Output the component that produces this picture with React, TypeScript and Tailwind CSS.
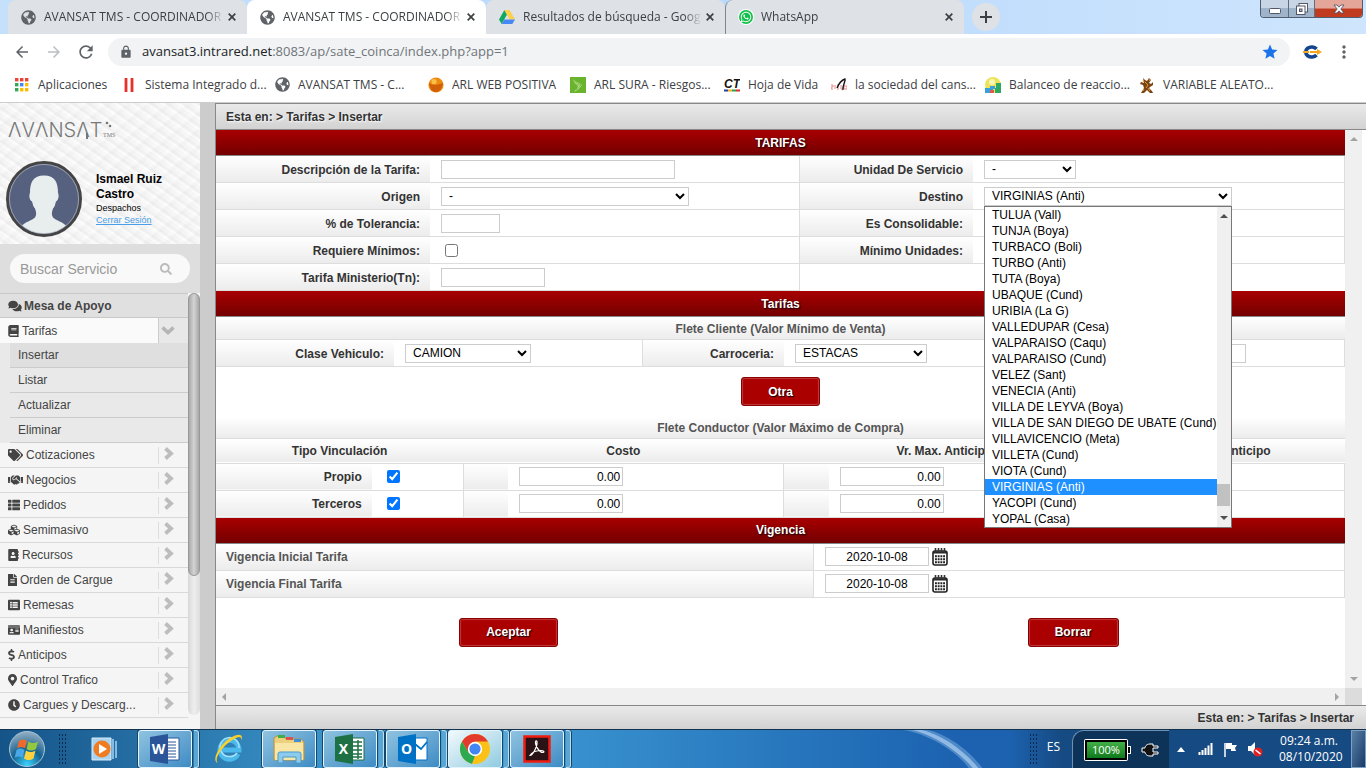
import { useState } from "react";
import type { ReactNode } from "react";
import {
  FaAddressBook,
  FaBook,
  FaClock,
  FaComments,
  FaCubes,
  FaDollarSign,
  FaFileAlt,
  FaGlobeAmericas,
  FaHandshake,
  FaIdCard,
  FaListAlt,
  FaMapMarkerAlt,
  FaSearch,
  FaTags,
  FaThList,
  FaWhatsapp,
} from "react-icons/fa";
import { MdArrowBack, MdArrowForward, MdLock, MdRefresh, MdStar, MdMoreVert } from "react-icons/md";

/* ---------- Browser ---------- */

function Globe() {
  return <FaGlobeAmericas className="size-[15px] shrink-0 text-[#5f6368]" />;
}

function DriveIcon() {
  return (
    <svg viewBox="0 0 16 14" className="h-[14px] w-4 shrink-0">
      <path d="M5.4 0 0 9.4 2.7 14 8 4.6z" fill="#11a861" />
      <path d="M5.4 0h5.2L16 9.4h-5.3z" fill="#ffcf48" />
      <path d="M5.3 9.4H16L13.3 14H2.7z" fill="#4688f4" />
    </svg>
  );
}

function WhatsAppIcon() {
  return (
    <span className="grid size-[14px] shrink-0 place-items-center rounded-full bg-[#12c04a] ring-1 ring-white">
      <FaWhatsapp className="size-3 text-white" />
    </span>
  );
}

function Cross() {
  return (
    <svg viewBox="0 0 8 8" className="size-2 shrink-0">
      <path d="M.7.7l6.6 6.6M7.3.7.7 7.3" stroke="#3c4043" strokeWidth="1.7" />
    </svg>
  );
}

const tabs = [
  { title: "AVANSAT TMS - COORDINADOR", icon: <Globe />, active: false },
  { title: "AVANSAT TMS - COORDINADOR", icon: <Globe />, active: true },
  { title: "Resultados de búsqueda - Google", icon: <DriveIcon />, active: false },
  { title: "WhatsApp", icon: <WhatsAppIcon />, active: false },
];

function TabStrip() {
  return (
    <div className="flex h-[34px] bg-linear-to-r from-[#c5e0fb] via-[#b8d9fc] to-[#cfe5fd] pl-2">
      {tabs.map((tab, i) => (
        <div
          key={i}
          className={
            "flex w-[239px] items-center rounded-t-lg pr-[11px] pl-[13px] " +
            (tab.active ? "bg-white" : "bg-[#dee1e6]") +
            (i === 3 ? " border-l border-[#80868b]" : "")
          }
        >
          {tab.icon}
          <span className="ml-2 flex-1 overflow-hidden text-xs whitespace-nowrap text-[#3c4043] [mask-image:linear-gradient(to_right,black_90%,transparent)]">
            {tab.title}
          </span>
          <button aria-label="Cerrar pestaña" className="ml-1">
            <Cross />
          </button>
        </div>
      ))}
      <button aria-label="Nueva pestaña" className="mt-[3px] ml-2 grid size-7 place-items-center rounded-full bg-[#dee1e6]">
        <svg viewBox="0 0 12 12" className="size-3">
          <path d="M6 0v12M0 6h12" stroke="#3c4043" strokeWidth="2" />
        </svg>
      </button>
      <div className="mr-[3px] ml-auto flex h-[18px] overflow-hidden rounded-b border border-t-0 border-[#4e5d70]">
        <button aria-label="Minimizar" className="grid w-7 place-items-center border-r border-[#5d6d80] bg-linear-to-b from-[#c8d5e4] from-50% to-[#9fb3ca] to-50%">
          <svg viewBox="0 0 12 6" className="mt-1 h-[6px] w-3">
            <rect x=".5" y=".5" width="11" height="5" rx="1" fill="#fff" stroke="#535666" />
          </svg>
        </button>
        <button aria-label="Restaurar" className="grid w-[26px] place-items-center border-r border-[#5d6d80] bg-linear-to-b from-[#c8d5e4] from-50% to-[#9fb3ca] to-50%">
          <svg viewBox="0 0 12 12" className="size-3">
            <rect x="3" y=".5" width="8.5" height="8.5" fill="#fff" stroke="#535666" />
            <rect x=".5" y="3" width="8.5" height="8.5" fill="#fff" stroke="#535666" />
            <rect x="3.5" y="6" width="2.5" height="2.5" fill="#9fb3ca" stroke="#535666" />
          </svg>
        </button>
        <button aria-label="Cerrar" className="grid w-[47px] place-items-center bg-linear-to-b from-[#e4a698] from-45% to-[#c03a20] to-55%">
          <svg viewBox="0 0 12 10" className="h-[10px] w-3">
            <path d="M1 1h3l2 2.2L8 1h3L7.8 5 11 9H8L6 6.8 4 9H1l3.2-4z" fill="#fff" stroke="#535666" strokeWidth=".9" />
          </svg>
        </button>
      </div>
    </div>
  );
}

function Toolbar() {
  return (
    <div className="flex h-9 items-center bg-white pr-3 pl-[13px]">
      <MdArrowBack className="size-[18px] text-[#5f6368]" />
      <MdArrowForward className="ml-[14px] size-[18px] text-[#bcbfc2]" />
      <MdRefresh className="ml-[13px] size-5 text-[#5f6368]" />
      <div className="ml-3 flex h-7 flex-1 items-center rounded-full bg-[#f1f3f4] px-[11px]">
        <MdLock className="size-[14px] text-[#5f6368]" />
        <div className="ml-[9px] flex-1 text-[13px] whitespace-nowrap text-[#70757a]">
          <span className="text-[#202124]">avansat3.intrared.net</span>:8083/ap/sate_coinca/index.php?app=1
        </div>
        <MdStar className="size-[18px] text-[#1a73e8]" />
      </div>
      <svg viewBox="0 0 20 14" className="ml-3 h-[14px] w-5">
        <path d="M14.5 4A6 5 0 1 0 14.5 10" fill="none" stroke="#12458c" strokeWidth="3.6" />
        <path d="M1 7h6M8 7h8" stroke="#f5a81c" strokeWidth="2" />
        <path d="M15 4l5 3-5 3z" fill="#f5a81c" />
      </svg>
      <MdMoreVert className="ml-3 size-5 text-[#5f6368]" />
    </div>
  );
}

const appDots = ["#ea4335", "#ea4335", "#ea4335", "#34a853", "#4285f4", "#fbbc04", "#34a853", "#fbbc04", "#fbbc04"];

const bookmarks: { label: string; width: string; icon: ReactNode }[] = [
  {
    label: "Aplicaciones",
    width: "w-[107px]",
    icon: appDots.map((c, i) => <rect key={i} x={1 + (i % 3) * 5} y={1 + Math.floor(i / 3) * 5} width="3.4" height="3.4" fill={c} />),
  },
  { label: "Sistema Integrado d...", width: "w-[154px]", icon: <path d="M5 1v14M11 1v14" stroke="#e8302a" strokeWidth="2.8" /> },
  { label: "AVANSAT TMS - C...", width: "w-[153px]", icon: null },
  {
    label: "ARL WEB POSITIVA",
    width: "w-[142px]",
    icon: (
      <>
        <circle cx="8" cy="8" r="7.6" fill="#ef8a10" />
        <path d="M1 6c4 3 9 2 14 0-1 6-4 9-7 9S2 13 1 6z" fill="#cf5f08" />
        <circle cx="6" cy="4.5" r="2.6" fill="#fbc04a" />
      </>
    ),
  },
  {
    label: "ARL SURA - Riesgos...",
    width: "w-[154px]",
    icon: (
      <>
        <path d="M0 0h16v16H0z" fill="#69b32d" />
        <path d="M3 2c2 3 6 3 9 6-2 3-4 5-8 7 2-3 4-4 4-6-2-1-4-3-5-7z" fill="#b9dd96" />
        <path d="M4 4c2 2 5 2 7 4M5 7c2 1 4 1 6 1M6 13c2-2 4-3 5-5" stroke="#69b32d" strokeWidth=".7" fill="none" />
      </>
    ),
  },
  {
    label: "Hoja de Vida",
    width: "w-[107px]",
    icon: (
      <>
        <text x="0" y="11" fontSize="12" fontWeight="900" fontStyle="italic" fontFamily="Liberation Sans, sans-serif" fill="#111">
          CT
        </text>
        <path d="M0 13.5h4" stroke="#21409a" strokeWidth="2" />
        <path d="M4 13.5h4" stroke="#f2b31b" strokeWidth="2" />
        <path d="M8 13.5h4" stroke="#2c9d51" strokeWidth="2" />
        <path d="M12 13.5h4" stroke="#d92b2b" strokeWidth="2" />
      </>
    ),
  },
  {
    label: "la sociedad del cans...",
    width: "w-[154px]",
    icon: (
      <>
        <path d="M0 8h2v2H0v2h2M4 8v4M6 8h2M6 10h2M6 12h2M10 8v4h2M13 9v3h3V9z" stroke="#e88a8a" fill="none" />
        <path d="M6 11c2-5 5-8 8-9 1 2-3 7-2 11" stroke="#111" strokeWidth="1.4" fill="none" />
      </>
    ),
  },
  {
    label: "Balanceo de reaccio...",
    width: "w-[154px]",
    icon: (
      <>
        <circle cx="8" cy="8" r="8" fill="#ede35a" />
        <circle cx="7" cy="5" r="3" fill="#faf6b4" />
        <path d="M0 11h8v5H0zM5 9h5v3H5z" fill="#3aa0dc" />
        <path d="M11 6h5v10h-6v-5h1z" fill="#2fa866" />
        <path d="M5 13h4v3H5z" fill="#e2574c" />
      </>
    ),
  },
  {
    label: "VARIABLE ALEATO...",
    width: "w-[154px]",
    icon: (
      <>
        <path d="M4 1l2 2 2 1 2-3 2 2-2 3 2 1 2-2v3l-3 2-1 1 3 3 1 2h-3l-3-3-3 3H2l3-5-1-3-3-1 1-2 3 1z" fill="#7a4312" />
        <path d="M6 5l3 3-2 3M10 2l1 2M4 3l1 2M9 11l2 3M5 12l-1 2" stroke="#e39a3b" fill="none" />
      </>
    ),
  },
];

function Bookmarks() {
  return (
    <nav className="flex h-8 items-center overflow-hidden bg-white pb-[3px] pl-[14px] text-xs text-[#3c4043]">
      {bookmarks.map((b) => (
        <a key={b.label} href="#" className={"flex shrink-0 items-center gap-2 whitespace-nowrap " + b.width}>
          {b.icon ? (
            <svg viewBox="0 0 16 16" className="size-4 shrink-0">
              {b.icon}
            </svg>
          ) : (
            <Globe />
          )}
          {b.label}
        </a>
      ))}
    </nav>
  );
}

/* ---------- Sidebar ---------- */

const subItems = ["Insertar", "Listar", "Actualizar", "Eliminar"];

const menu: { label: string; icon: ReactNode }[] = [
  { label: "Cotizaciones", icon: <FaTags className="h-3 w-[15px]" /> },
  { label: "Negocios", icon: <FaHandshake className="h-3 w-[15px]" /> },
  { label: "Pedidos", icon: <FaThList className="size-3" /> },
  { label: "Semimasivo", icon: <FaCubes className="size-3" /> },
  { label: "Recursos", icon: <FaAddressBook className="h-3 w-[11px]" /> },
  { label: "Orden de Cargue", icon: <FaFileAlt className="h-3 w-[9px]" /> },
  { label: "Remesas", icon: <FaListAlt className="size-3" /> },
  { label: "Manifiestos", icon: <FaIdCard className="size-3" /> },
  { label: "Anticipos", icon: <FaDollarSign className="h-3 w-[7px]" /> },
  { label: "Control Trafico", icon: <FaMapMarkerAlt className="h-3 w-[9px]" /> },
  { label: "Cargues y Descarg...", icon: <FaClock className="size-3" /> },
];

function Sidebar() {
  return (
    <aside className="flex w-[200px] shrink-0 flex-col overflow-hidden bg-[#f5f5f5] text-xs text-[#444]">
      <div className="h-[141px] bg-[#f3f3f3] bg-[repeating-linear-gradient(35deg,#ffffff80_0_2px,#ebebeb80_3px_5px,#f6f6f680_6px_9px),repeating-linear-gradient(140deg,#ffffff80_0_3px,#e9e9e980_5px_7px,#f6f6f680_9px_13px)] px-[6px] pt-[15px]">
        <svg viewBox="0 0 110 24" className="h-6 w-[110px]" aria-label="Avansat TMS">
          <text x="2" y="19" fontSize="20" fontWeight="300" fontFamily="Inter, sans-serif" fill="#777">
            ΛVΛNSΛT
          </text>
          <path d="M81 15v6" stroke="#777" strokeWidth="2" />
          <circle cx="101" cy="5" r="1.300" fill="#777" />
          <circle cx="104" cy="8" r="1.300" fill="#777" />
          <text x="97" y="19" fontSize="6" fontFamily="Liberation Serif, serif" fill="#777">
            TMS
          </text>
        </svg>
        <div className="mt-[19px] flex items-center gap-[14px]">
          <svg viewBox="0 0 76 76" className="size-[76px] shrink-0">
            <circle cx="38" cy="38" r="36.5" fill="#56607f" stroke="#444" strokeWidth="3" />
            <path
              d="M16 64.500c4-4 10-5 13-8 2-3 1-6 0-9-2-2-2-4-3-7-3-2-3-6-2-9 0-10 3-17 14-17s14 7 14 17c1 3 1 7-2 9-1 3-1 5-3 7-1 3-2 6 0 9 3 3 9 4 13 8-6 5-13 8-22 8s-16-3-22-8z"
              fill="#e8eeee"
            />
            <circle cx="38" cy="38" r="34.600" fill="none" stroke="#b9bfca" strokeWidth=".7" />
          </svg>
          <div className="text-[9px] leading-3 text-black">
            <p className="text-xs leading-[15px] font-bold">
              Ismael Ruiz
              <br />
              Castro
            </p>
            <p>Despachos</p>
            <a href="#" className="text-[#4b9fea] underline">
              Cerrar Sesión
            </a>
          </div>
        </div>
      </div>
      <div className="bg-[#dedede] p-[10px]">
        <div className="flex h-[29px] items-center rounded-full bg-[#f9f9f9] pr-[18px] pl-[10px]">
          <input
            aria-label="Buscar Servicio"
            placeholder="Buscar Servicio"
            className="w-full min-w-0 bg-transparent text-sm outline-none placeholder:text-[#999]"
          />
          <FaSearch className="size-3 shrink-0 text-[#bbb]" />
        </div>
      </div>
      <div className="flex flex-1">
        <nav className="w-[188px] border-t border-[#c8c8c8]">
          <a href="#" className="flex h-6 items-center gap-[2px] border-b border-[#c8c8c8] bg-[#e0e0e0] pl-2 font-bold">
            <FaComments className="h-3 w-[14px]" /> Mesa de Apoyo
          </a>
          <a href="#" className="flex h-[25px] items-center gap-[3px] bg-[#fafafa] pl-2">
            <FaBook className="h-3 w-[11px]" /> Tarifas
            <span className="ml-auto flex h-full w-[30px] items-center border-l border-[#ccc] bg-[#e8e8e8] pl-[2px]">
              <svg viewBox="0 0 14 9" className="h-[9px] w-[14px]">
                <path d="M1.5 1.5 7 6.5l5.5-5" fill="none" stroke="#b5b5b5" strokeWidth="3.6" />
              </svg>
            </span>
          </a>
          <div className="bg-[#e9e9e9] pl-[10px]">
            {subItems.map((s, i) => (
              <a
                key={s}
                href="#"
                className={"flex h-[25px] items-center border-b border-[#ccc] pl-2 " + (i === 0 ? "bg-[#dfdfdf]" : "")}
              >
                {s}
              </a>
            ))}
          </div>
          {menu.map((m) => (
            <a key={m.label} href="#" className="flex h-[25px] items-center gap-[3px] border-b border-[#d9d9d9] pl-2">
              {m.icon} {m.label}
              <span className="ml-auto flex h-[17px] w-[30px] items-start border-l border-[#ddd] pl-[5px]">
                <svg viewBox="0 0 10 13" className="h-[13px] w-[10px]">
                  <path d="M1.5 1.5 7 6.5l-5.5 5" fill="none" stroke="#bdbdbd" strokeWidth="3.8" />
                </svg>
              </span>
            </a>
          ))}
        </nav>
        <div className="mb-[14px] flex-1 rounded-full bg-linear-to-r from-[#d8d8d8] via-[#eee] to-[#ddd]">
          <div className="h-[67%] rounded-full border border-[#999] bg-linear-to-r from-[#aaa] via-[#d4d4d4] to-[#a6a6a6]" />
        </div>
      </div>
    </aside>
  );
}

/* ---------- Form ---------- */

const box = "h-[19px] rounded-none border border-[#ccc] bg-white text-xs text-black ";
const labelBg = "bg-linear-to-b from-white to-[#ececec] ";

function SectionTitle({ children }: { children: ReactNode }) {
  return (
    <h2 className="flex h-[26px] items-center justify-center border-b border-[#888] bg-linear-to-b from-[#a80000] to-[#740000] font-bold text-white [text-shadow:1px_1px_2px_#000]">
      {children}
    </h2>
  );
}

function Label({ htmlFor, children }: { htmlFor?: string; children?: ReactNode }) {
  return (
    <label
      htmlFor={htmlFor}
      className={"flex h-[27px] items-center justify-end border-b border-[#ddd] pt-px pr-[10px] font-bold whitespace-nowrap " + labelBg}
    >
      {children}
    </label>
  );
}

function Cell({ children }: { children?: ReactNode }) {
  return <div className="relative flex h-[27px] items-center border-r border-b border-[#ddd] pl-[11px]">{children}</div>;
}

function RedButton({ children, className }: { children: ReactNode; className: string }) {
  return (
    <button
      type="button"
      className={
        "h-[29px] rounded-[3px] border border-[#8a0000] bg-[#ab0000] font-bold text-white shadow-[inset_0_0_1px_1px_#c03a3a] [text-shadow:1px_1px_1px_#000] " +
        className
      }
    >
      {children}
    </button>
  );
}

function CalendarIcon() {
  return (
    <svg viewBox="0 0 16 18" className="h-[18px] w-4">
      <rect x="1" y="3" width="14" height="14" rx="2" fill="#fff" stroke="#222" strokeWidth="1.6" />
      <path d="M1 3.5h14v2H1z" fill="#222" />
      <path d="M3.5 0v5M6.5 0v5M9.5 0v5M12.5 0v5" stroke="#333" strokeWidth="1.6" />
      <path
        d="M3 8.200h10M3 11.200h10M3 14.200h10"
        stroke="#222"
        strokeWidth="2"
        strokeDasharray="1.900 .8"
      />
    </svg>
  );
}

const cities = [
  "TULUA (Vall)",
  "TUNJA (Boya)",
  "TURBACO (Boli)",
  "TURBO (Anti)",
  "TUTA (Boya)",
  "UBAQUE (Cund)",
  "URIBIA (La G)",
  "VALLEDUPAR (Cesa)",
  "VALPARAISO (Caqu)",
  "VALPARAISO (Cund)",
  "VELEZ (Sant)",
  "VENECIA (Anti)",
  "VILLA DE LEYVA (Boya)",
  "VILLA DE SAN DIEGO DE UBATE (Cund)",
  "VILLAVICENCIO (Meta)",
  "VILLETA (Cund)",
  "VIOTA (Cund)",
  "VIRGINIAS (Anti)",
  "YACOPI (Cund)",
  "YOPAL (Casa)",
];

function Arrow({ dir, dark }: { dir: "up" | "down" | "left" | "right"; dark?: boolean }) {
  const d = { up: "M0 6l4-4 4 4z", down: "M0 2l4 4 4-4z", left: "M6 0 2 4l4 4z", right: "M2 0l4 4-4 4z" }[dir];
  return (
    <svg viewBox="0 0 8 8" className="size-2">
      <path d={d} fill={dark ? "#505050" : "#a3a3a3"} />
    </svg>
  );
}

function CityList({ value, onPick }: { value: string; onPick: (c: string) => void }) {
  return (
    <div className="absolute top-[23px] left-[11px] z-10 flex w-[248px] border border-[#777] bg-white">
      <ul role="listbox" aria-label="Destino" className="flex-1 text-xs leading-4 whitespace-nowrap text-black">
        {cities.map((c) => (
          <li
            key={c}
            role="option"
            aria-selected={c === value}
            onClick={() => onPick(c)}
            className={"pl-[7px] " + (c === value ? "bg-[#1e90ff] text-white" : "")}
          >
            {c}
          </li>
        ))}
      </ul>
      <div className="flex w-[17px] flex-col items-center justify-between bg-[#f0f0f0] py-[5px]">
        <Arrow dir="up" dark />
        <div className="flex flex-1 flex-col justify-end pb-2">
          <div className="h-[22px] w-[13px] bg-[#c1c1c1]" />
        </div>
        <Arrow dir="down" dark />
      </div>
    </div>
  );
}

function TarifaForm() {
  const [city, setCity] = useState("VIRGINIAS (Anti)");
  return (
    <form className="text-xs text-[#333]">
      <SectionTitle>TARIFAS</SectionTitle>
      <div className="grid grid-cols-[214fr_370fr_173fr_372fr]">
        <Label htmlFor="desc">Descripción de la Tarifa:</Label>
        <Cell>
          <input id="desc" className={box + "w-[234px] px-1"} />
        </Cell>
        <Label htmlFor="unidad">Unidad De Servicio</Label>
        <Cell>
          <select id="unidad" className={box + "w-[92px] pl-[3px]"}>
            <option>-</option>
          </select>
        </Cell>
        <Label htmlFor="origen">Origen</Label>
        <Cell>
          <select id="origen" className={box + "w-[248px] pl-[3px]"}>
            <option>-</option>
          </select>
        </Cell>
        <Label htmlFor="destino">Destino</Label>
        <Cell>
          <select id="destino" value={city} onChange={(e) => setCity(e.target.value)} className={box + "w-[248px] pl-[3px]"}>
            {cities.map((c) => (
              <option key={c}>{c}</option>
            ))}
          </select>
          <CityList value={city} onPick={setCity} />
        </Cell>
        <Label htmlFor="tol">% de Tolerancia:</Label>
        <Cell>
          <input id="tol" className={box + "w-[59px] px-1"} />
        </Cell>
        <Label htmlFor="consol">Es Consolidable:</Label>
        <Cell>
          <input id="consol" type="checkbox" className="ml-1 size-[13px]" />
        </Cell>
        <Label htmlFor="reqmin">Requiere Mínimos:</Label>
        <Cell>
          <input id="reqmin" type="checkbox" className="ml-1 size-[13px]" />
        </Cell>
        <Label htmlFor="minuni">Mínimo Unidades:</Label>
        <Cell>
          <input id="minuni" className={box + "w-[104px] px-1"} />
        </Cell>
        <Label htmlFor="minis">Tarifa Ministerio(Tn):</Label>
        <Cell>
          <input id="minis" className={box + "w-[104px] px-1"} />
        </Cell>
      </div>

      <SectionTitle>Tarifas</SectionTitle>
      <h3 className={"flex h-[23px] items-center justify-center border-b border-[#ddd] pt-px font-bold text-[#555] " + labelBg}>
        Flete Cliente (Valor Mínimo de Venta)
      </h3>
      <div className="grid grid-cols-[178fr_249fr_141fr_250fr_97fr_214fr]">
        <Label htmlFor="clase">Clase Vehiculo:</Label>
        <Cell>
          <select id="clase" className={box + "w-[126px] pl-[3px]"}>
            <option>CAMION</option>
          </select>
        </Cell>
        <Label htmlFor="carro">Carroceria:</Label>
        <Cell>
          <select id="carro" className={box + "w-[132px] pl-[3px]"}>
            <option>ESTACAS</option>
          </select>
        </Cell>
        <Label />
        <Cell>
          <input aria-label="Costo" className={box + "w-[104px] px-1"} />
        </Cell>
      </div>
      <div className="flex justify-center pt-[10px] pb-[11px]">
        <RedButton className="w-[79px]">Otra</RedButton>
      </div>
      <table className="w-full table-fixed border-collapse">
        <caption className={"h-[22px] border-b border-[#ddd] leading-[22px] font-bold text-[#555] " + labelBg}>
          Flete Conductor (Valor Máximo de Compra)
        </caption>
        <colgroup>
          <col className="w-[13.8%]" />
          <col className="w-[8.1%]" />
          <col className="w-[4%]" />
          <col className="w-[24.4%]" />
          <col className="w-[4%]" />
          <col className="w-[24.5%]" />
          <col className="w-[4%]" />
          <col />
        </colgroup>
        <thead>
          <tr className={"h-[24px] border-b border-[#ddd] " + labelBg}>
            {["Tipo Vinculación", "Costo", "Vr. Max. Anticipo", "% Max. Anticipo"].map((h) => (
              <th key={h} colSpan={2} scope="col" className="p-0 pt-px">
                {h}
              </th>
            ))}
          </tr>
        </thead>
        <tbody>
          {["Propio", "Terceros"].map((name) => (
            <tr key={name} className="h-[27px] border-b border-[#ddd]">
              <th scope="row" className={"p-0 pt-px pr-[10px] text-right " + labelBg}>
                <label htmlFor={name}>{name}</label>
              </th>
              <td className="border-r border-[#ddd] p-0 pl-[15px]">
                <input id={name} type="checkbox" defaultChecked className="block size-[13px]" />
              </td>
              {["Costo", "Vr. Max. Anticipo", "% Max. Anticipo"].map((h, i) => [
                <td key={h + "-pad"} className={"p-0 " + labelBg} />,
                <td key={h} className="border-r border-[#ddd] p-0 pl-[11px]">
                  <input
                    aria-label={name + " " + h}
                    defaultValue={i < 2 ? "0.00" : ""}
                    className={box + "block pr-[2px] text-right " + (i < 2 ? "w-[104px]" : "w-[59px]")}
                  />
                </td>,
              ])}
            </tr>
          ))}
        </tbody>
      </table>

      <SectionTitle>Vigencia</SectionTitle>
      {["Vigencia Inicial Tarifa", "Vigencia Final Tarifa"].map((v) => (
        <div key={v} className="grid grid-cols-[598fr_531fr]">
          <label
            htmlFor={v}
            className={"flex h-[27px] items-center border-r border-b border-[#ddd] pt-px pl-[10px] font-bold text-[#555] " + labelBg}
          >
            {v}
          </label>
          <Cell>
            <input id={v} defaultValue="2020-10-08" className={box + "w-[104px] text-center"} />
            <button type="button" aria-label="Abrir calendario" className="ml-[3px]">
              <CalendarIcon />
            </button>
          </Cell>
        </div>
      ))}
      <div className="grid grid-cols-[585fr_544fr] justify-items-center pt-5">
        <RedButton className="w-[99px]">Aceptar</RedButton>
        <RedButton className="w-[91px]">Borrar</RedButton>
      </div>
    </form>
  );
}

function Panel() {
  return (
    <main className="flex min-w-0 flex-1 flex-col border-t border-l border-[#888] bg-white text-xs">
      <div className="flex h-[26px] shrink-0 items-center border-b border-[#888] bg-linear-to-b from-[#eaeaea] to-[#d2d2d2] pl-[10px] font-bold text-[#333] [text-shadow:1px_1px_2px_#fff]">
        Esta en: &gt; Tarifas &gt; Insertar
      </div>
      <div className="flex min-h-0 flex-1 pr-1">
        <div className="flex min-w-0 flex-1 flex-col">
          <div className="min-h-0 flex-1">
            <TarifaForm />
          </div>
          <div className="flex h-[17px] items-center justify-between bg-[#f0f0f0] px-1">
            <Arrow dir="left" />
            <Arrow dir="right" />
          </div>
        </div>
        <div className="flex w-[17px] flex-col">
          <div className="flex flex-1 flex-col items-center justify-between bg-[#f0f0f0] py-[5px]">
            <Arrow dir="up" />
            <Arrow dir="down" />
          </div>
          <div className="h-[17px] bg-[#dcdcdc]" />
        </div>
      </div>
      <div className="flex h-[24px] shrink-0 items-center justify-end border-t border-[#888] bg-linear-to-b from-[#eaeaea] to-[#d2d2d2] pr-3 font-bold text-[#333]">
        Esta en: &gt; Tarifas &gt; Insertar
      </div>
    </main>
  );
}

/* ---------- Taskbar ---------- */

function Grip() {
  return (
    <div className="h-8 w-2 bg-[radial-gradient(circle,#0b2a4a_0_1px,transparent_1px)] bg-[length:3px_4px]" />
  );
}

function OfficeIcon({ letter, color, children }: { letter: string; color: string; children: ReactNode }) {
  return (
    <svg viewBox="0 0 30 30" className="size-[30px]">
      <path d="M16 4h13v22H16z" fill="#fff" stroke={color} />
      {children}
      <path d="M0 3l18-3v30L0 27z" fill={color} />
      <text x="8.5" y="20" textAnchor="middle" fontSize="14" fontWeight="700" fontFamily="Open Sans, sans-serif" fill="#fff">
        {letter}
      </text>
    </svg>
  );
}

function TaskButton({ label, children, stacked, active }: { label: string; children: ReactNode; stacked?: boolean; active?: boolean }) {
  return (
    <div className="flex h-[38px]">
      <button
        aria-label={label}
        className={
          "grid w-[54px] place-items-center rounded-[3px] border border-[#e3f4ff] shadow-[0_0_0_1px_#17466b] " +
          (active ? "bg-linear-to-br from-[#f2fafd] to-[#8fcbe0]" : "bg-linear-to-br from-[#8fc3e0] to-[#3d8cc4]")
        }
      >
        {children}
      </button>
      {stacked && <span className="ml-[2px] w-[5px] rounded-r-[3px] border border-l-0 border-[#b9def2] bg-[#5aa6d3] shadow-[1px_0_0_#17466b]" />}
    </div>
  );
}

function Taskbar() {
  return (
    <footer className="flex h-[39px] shrink-0 items-center overflow-hidden border-t border-[#12324e] bg-linear-to-r from-[#155489] via-[#45a5da] via-30% to-[#1c62b0] to-70% text-white">
      <button aria-label="Inicio" className="ml-2">
        <svg viewBox="0 0 38 38" className="size-[38px]">
          <defs>
            <radialGradient id="orb" cx=".5" cy=".95" r=".9">
              <stop offset="0" stopColor="#39d4ff" />
              <stop offset=".5" stopColor="#14618f" />
              <stop offset="1" stopColor="#8aa9bf" />
            </radialGradient>
          </defs>
          <circle cx="19" cy="19" r="17.5" fill="url(#orb)" stroke="#a9c6d8" />
          <path d="M11 11c3-2 5-2 8 0l-2 7.500c-3-2-5-2-8 0z" fill="#ee6a2c" />
          <path d="M20.500 11.500c3 2 6 2 9.500 0l-2 7.500c-3 2-6 2-9.500 0z" fill="#93c83e" />
          <path d="M8.500 20c3-2 5-2 8 0l-2 8c-3-2-5-2-8 0z" fill="#4aa8e8" />
          <path d="M18 20.500c3 2 6 2 9.500 0l-2 8c-3 2-6 2-9.500 0z" fill="#fdd23c" />
        </svg>
      </button>
      <div className="ml-3">
        <Grip />
      </div>
      <button aria-label="Reproductor" className="ml-[25px]">
        <svg viewBox="0 0 28 24" className="h-6 w-7">
          <path d="M1 1h19v22H1z" fill="#a9d3ee" stroke="#d9eefb" />
          <path d="M21 2h2v20h-2zM24 4h2v17h-2z" fill="#83bde3" />
          <circle cx="11" cy="12" r="8.5" fill="#f07c22" />
          <path d="M8 7l8 5-8 5z" fill="#fff" />
        </svg>
      </button>
      <div className="ml-[19px]">
        <TaskButton label="Word" stacked>
          <OfficeIcon letter="W" color="#2a5699">
            <path d="M18 8h8M18 11h8M18 14h8M18 17h8M18 20h8M18 23h8" stroke="#2a5699" />
          </OfficeIcon>
        </TaskButton>
      </div>
      <button aria-label="Internet Explorer" className="ml-[14px]">
        <svg viewBox="0 0 32 32" className="size-8">
          <path d="M25 21A9.500 9.500 0 1 1 26 17H8" fill="none" stroke="#4cb9ec" strokeWidth="5" />
          <path d="M24 20A9.500 9.500 0 1 1 26 15" fill="none" stroke="#a6e2fb" strokeWidth="1.500" />
          <path d="M5 30C-3 28 8 9 19 4c7-4 12-3 9 4 1-5-2-5-7-2C10 12 0 26 5 30z" fill="#f8cf2b" />
        </svg>
      </button>
      <div className="ml-[17px] flex gap-[7px]">
        <TaskButton label="Explorador">
          <svg viewBox="0 0 32 30" className="h-[30px] w-8">
            <path d="M1 4l3-2h7l2 3h15l3 3v18H1z" fill="#ecd07c" stroke="#b8943c" />
            <path d="M5 1h7v3H5z" fill="#3fae49" />
            <path d="M13 3h7v3h-7z" fill="#d9534f" />
            <path d="M21 5h7v3h-7z" fill="#3f8fd9" />
            <path d="M2 9h28v17H2z" fill="#f8e6a6" />
            <path d="M5 29v-9q0-2 2-2h19q2 0 2 2v9h-5v-6H10v6z" fill="#8ccbed" stroke="#4b9bc8" />
          </svg>
        </TaskButton>
        <TaskButton label="Excel" stacked>
          <OfficeIcon letter="X" color="#1e7145">
            <path d="M18 8h9M18 12h9M18 16h9M18 20h9M18 23h9M23 6v19" stroke="#1e7145" strokeWidth="1.5" />
          </OfficeIcon>
        </TaskButton>
      </div>
      <div className="ml-[2px] flex gap-px">
        <TaskButton label="Outlook" stacked>
          <OfficeIcon letter="O" color="#0072c6">
            <path d="M17 10l6 5 6-7" fill="none" stroke="#0072c6" strokeWidth="1.8" />
          </OfficeIcon>
        </TaskButton>
        <TaskButton label="Chrome" stacked active>
          <svg viewBox="0 0 32 32" className="size-8">
            <circle cx="16" cy="16" r="15" fill="#fbc116" />
            <path d="M3 8.500a15 15 0 0 1 26 0H16L9.500 19.500z" fill="#e33b2e" />
            <path d="M3 8.500l6.500 11 6.500 3.500-3 7.700A15 15 0 0 1 3 8.500z" fill="#2da94f" />
            <circle cx="16" cy="16" r="7.200" fill="#fff" />
            <circle cx="16" cy="16" r="5.600" fill="#4285f4" />
          </svg>
        </TaskButton>
        <TaskButton label="Acrobat" stacked>
          <svg viewBox="0 0 28 28" className="size-7">
            <path d="M1.500 1.500h25v25h-25z" fill="#2b1216" stroke="#f01c10" strokeWidth="2.500" />
            <path
              d="M7 20.500c2.500 0 7.500-8.500 7-14-1-1.500-2.200 0-1.200 3 1.200 4 4.200 8 7.200 8 2-.6.500-2.200-2.500-2-4 .2-9 2-10.500 5z"
              fill="none"
              stroke="#fff"
              strokeWidth="1.200"
            />
          </svg>
        </TaskButton>
      </div>
      <svg viewBox="0 0 110 39" className="ml-auto h-full w-[110px]">
        <path d="M3 0C30 4 60 24 70 39h14C72 22 48 4 28 0z" fill="#bfe0ff" opacity=".3" />
        <path d="M12 0C38 6 64 26 74 39h6C68 24 46 6 22 0z" fill="#d3e9ff" opacity=".5" />
      </svg>
      <div className="flex h-full items-center bg-linear-to-r from-[#1c62b0] to-[#164a82] to-15% pl-5 text-xs">
        <Grip />
        <span className="ml-[10px] pb-1">ES</span>
        <div className="ml-3 flex h-full w-[97px] items-center rounded-tl-xl border-t border-l border-[#6d90b4] bg-[#0e3358] pl-3">
          <span className="rounded-[1px] border-2 border-black bg-linear-to-b from-[#41b047] to-[#0d7a1c] px-[5px] text-[11px] leading-[16px] ring-1 ring-white">
            100%
          </span>
          <span className="h-2 w-1 border border-white bg-black" />
          <svg viewBox="0 0 18 14" className="ml-[10px] h-[14px] w-[18px]">
            <path d="M9 1h3v2h5v2h-5v4h5v2h-5v2H9C5 13 4 10 4 9H1V5h3c0-1 1-4 5-4z" fill="#111" stroke="#fff" />
          </svg>
        </div>
        <svg viewBox="0 0 8 5" className="ml-2 h-[5px] w-2">
          <path d="M0 5l4-5 4 5z" fill="#fff" />
        </svg>
        <svg viewBox="0 0 15 12" className="ml-[13px] h-3 w-[15px]">
          <path d="M1.5 9v3M4.5 7v5M7.5 5v7M10.5 2.5v9.5M13.5 0v12" stroke="#fff" strokeWidth="2" />
        </svg>
        <svg viewBox="0 0 15 15" className="ml-[10px] size-[15px]">
          <path d="M2 1v14" stroke="#fff" strokeWidth="1.5" />
          <path d="M3 1h6v2h5l-2 3 1 3H8V7H3z" fill="#fff" />
        </svg>
        <svg viewBox="0 0 16 16" className="ml-[9px] size-4">
          <path d="M1 5h3l4-4v13l-4-4H1z" fill="#fff" />
          <circle cx="11" cy="11" r="4.5" fill="#e02020" />
          <path d="M8.5 9l5 4" stroke="#fff" strokeWidth="1.6" />
        </svg>
        <div className="ml-4 w-[60px] text-center leading-4 whitespace-nowrap">
          09:24 a.m.
          <br />
          08/10/2020
        </div>
        <div className="ml-3 h-full w-[15px] border border-[#7f9fc0] bg-linear-to-br from-[#5b81a8] to-[#173b66]" />
      </div>
    </footer>
  );
}

export default function App() {
  return (
    <div className="flex h-screen flex-col overflow-hidden bg-[#ccc] font-['Liberation_Sans',Arial,sans-serif]">
      <header className="shrink-0 border-b border-[#ccc] font-['Open_Sans','Noto_Sans',sans-serif]">
        <TabStrip />
        <Toolbar />
        <Bookmarks />
      </header>
      <div className="flex min-h-0 flex-1 gap-[15px]">
        <Sidebar />
        <Panel />
      </div>
      <div className="shrink-0 font-['Open_Sans','Noto_Sans',sans-serif]">
        <Taskbar />
      </div>
    </div>
  );
}
